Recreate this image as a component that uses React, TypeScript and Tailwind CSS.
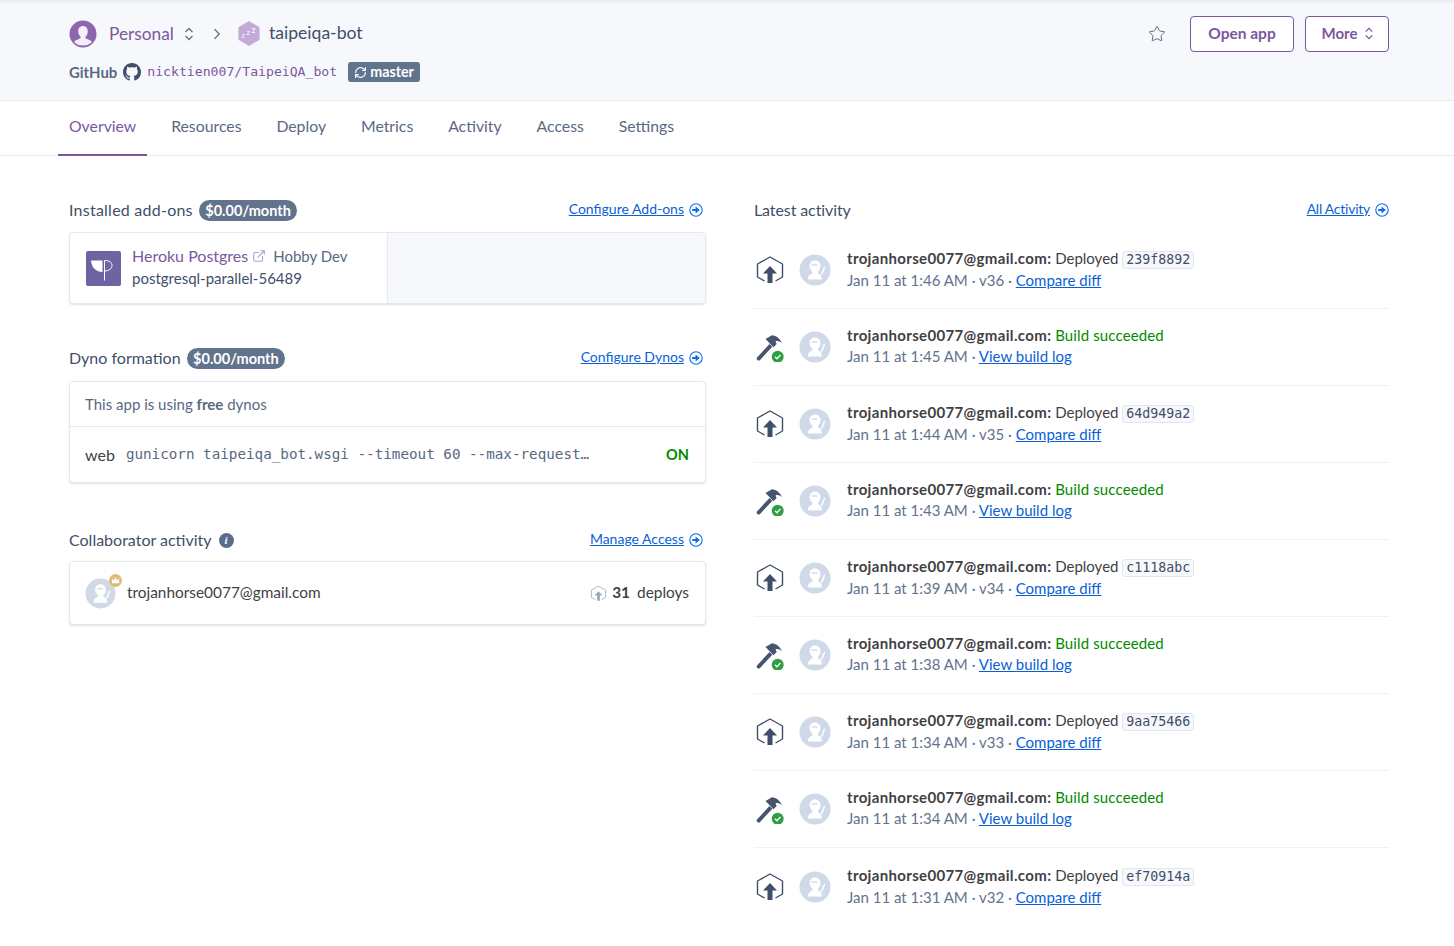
import { Star, ChevronRight, ExternalLink, RefreshCw } from 'lucide-react';

const sans = "font-['Lato','Noto_Sans',sans-serif]";
const mono = "font-['DejaVu_Sans_Mono','Liberation_Mono',monospace]";

type Item = { time: string; version?: string; sha?: string };

const activity: Item[] = [
  { time: 'Jan 11 at 1:46 AM', version: 'v36', sha: '239f8892' },
  { time: 'Jan 11 at 1:45 AM' },
  { time: 'Jan 11 at 1:44 AM', version: 'v35', sha: '64d949a2' },
  { time: 'Jan 11 at 1:43 AM' },
  { time: 'Jan 11 at 1:39 AM', version: 'v34', sha: 'c1118abc' },
  { time: 'Jan 11 at 1:38 AM' },
  { time: 'Jan 11 at 1:34 AM', version: 'v33', sha: '9aa75466' },
  { time: 'Jan 11 at 1:34 AM' },
  { time: 'Jan 11 at 1:31 AM', version: 'v32', sha: 'ef70914a' },
];

function UpDown({ className }: { className: string }) {
  return (
    <svg viewBox="0 0 10 14" fill="none" stroke="currentColor" strokeWidth="1.3" className={className}>
      <path d="M1.5 5 5 1.5 8.5 5M1.5 9 5 12.5 8.5 9" />
    </svg>
  );
}

function GoArrow() {
  return (
    <svg viewBox="0 0 14 14" className="w-[14px] h-[14px] shrink-0">
      <circle cx="7" cy="7" r="6.2" fill="none" stroke="#0b6fe8" strokeWidth="1.1" />
      <path d="M3.2 5.9h3.400V3.600L10.800 7 6.600 10.400V8.100H3.200z" fill="#0b6fe8" />
    </svg>
  );
}

function DeployHex({ className, color = '#3f4f69' }: { className: string; color?: string }) {
  return (
    <svg viewBox="0 0 28 30" className={className}>
      <path d="M8.500 26 1.500 22V9L14 2l12.500 7v13l-7 4" fill="none" stroke={color} strokeWidth="1.400" strokeLinejoin="round" />
      <path d="M14 11 21 18.500h-4.500V28h-5V18.500H7z" fill={color} />
    </svg>
  );
}

function Hammer() {
  return (
    <svg viewBox="0 0 30 30" className="w-[30px] h-[30px]">
      <path d="M2 25.500 14.500 12l2.800 2.800L4.800 28.200a2 2 0 0 1-2.800-2.700z" fill="#46546e" />
      <path d="M10.500 7 17 3.200c4 .200 7.800 3 10.300 8.300C24.500 9 22.500 8.500 20.500 9.500l1.200 2.500-3.200 3.200-8-8.200z" fill="#46546e" />
      <circle cx="22.700" cy="24.700" r="6" fill="#2ea043" />
      <path d="M20 24.700l2 2 3.500-3.800" fill="none" stroke="#fff" strokeWidth="1.300" />
    </svg>
  );
}

function Avatar({ className }: { className: string }) {
  return (
    <svg viewBox="0 0 32 32" className={className}>
      <circle cx="16" cy="16" r="15.500" fill="#d0d9e8" />
      <path d="M16 6.500c3.500 0 5.500 2.500 5.500 5.500 0 2.500-1 4.500-2.500 5.700v1.500l3 1.500 1 4.800H9c0-2.500.700-4 2-4.800l2.500-1.500v-1.500C12 16.500 10.500 14.500 10.500 12c0-3 2-5.500 5.500-5.500z" fill="#fff" />
      <path d="M12.500 11h6" stroke="#d0d9e8" strokeWidth="1.300" />
      <path d="M22 20l3-7.500 1.300.500-3 8z" fill="#fff" />
    </svg>
  );
}

function SectionHead({
  title,
  badge,
  link,
  info,
  titleClass,
  linkClass,
  pad = 'pr-[3px]',
}: {
  title: string;
  badge?: boolean;
  link: string;
  info?: boolean;
  titleClass?: string;
  linkClass?: string;
  pad?: string;
}) {
  return (
    <div className={`flex items-center h-[24px] ${pad}`}>
      <span className={`text-[16px] text-[#3f4f69] ${titleClass ?? ''}`}>{title}</span>
      {badge && (
        <span className="ml-[6px] h-[21px] px-[6.500px] rounded-full bg-[#62738d] text-white text-[14.500px] font-bold leading-[21px]">
          $0.00/month
        </span>
      )}
      {info && (
        <span className="ml-[7px] w-[15px] h-[15px] rounded-full bg-[#5a6e8c] text-white text-[11px] font-bold italic leading-[15px] text-center font-['Liberation_Serif',serif]">
          i
        </span>
      )}
      <a className={`ml-auto mr-[5px] -mt-[3px] text-[14px] text-[#0b5fd6] underline ${linkClass ?? ''}`}>{link}</a>
      <GoArrow />
    </div>
  );
}

function Card({ children, className }: { children: React.ReactNode; className?: string }) {
  return (
    <div className={`rounded-[4px] border border-[#e4e8ef] bg-white shadow-[0_1px_2px_rgba(89,105,129,0.2)] ${className ?? ''}`}>
      {children}
    </div>
  );
}

function ActivityRow({ item }: { item: Item }) {
  const deploy = !!item.sha;
  return (
    <div className="flex items-center h-[77px] border-b border-[#eef1f6] last:border-b-0">
      <div className="w-[30px] ml-px flex justify-center">
        {deploy ? <DeployHex className="w-[28px] h-[30px]" /> : <Hammer />}
      </div>
      <Avatar className="ml-[14px] w-[32px] h-[32px]" />
      <div className={`ml-[16px] ${deploy ? 'pb-[2px]' : 'pb-[3px]'}`}>
        <div className="text-[15px] leading-[22px] text-[#3f3f44]">
          <span className="font-bold tracking-[0.34px]">trojanhorse0077@gmail.com:</span>{' '}
          {deploy ? (
            <>
              Deployed{' '}
              <span className={`${mono} inline-block text-[13.300px] leading-[16px] text-[#3f4f69] bg-[#f7f8fb] border border-[#e0e5ee] rounded-[3px] px-[3px]`}>
                {item.sha}
              </span>
            </>
          ) : (
            <span className="text-[#008a00] tracking-[0.13px]">Build succeeded</span>
          )}
        </div>
        <div className={`text-[15px] leading-[21px] text-[#62738d] ${deploy ? 'mt-px' : ''}`}>
          {item.time}
          {deploy ? ` · ${item.version} · ` : ' · '}
          <a className="text-[#0b5fd6] underline">{deploy ? 'Compare diff' : 'View build log'}</a>
        </div>
      </div>
    </div>
  );
}

export default function App() {
  return (
    <div className={`${sans} min-h-[946px] bg-white overflow-hidden`}>
      <header className="h-[101px] bg-[#f7f8fb] border-b border-[#e7ebf3] bg-[linear-gradient(#e9ebf0,#f7f8fb_5px)] pl-[69px] pr-[65px] pt-[16px]">
        <div className="flex items-center h-[35px]">
          <svg viewBox="0 0 28 28" className="w-[28px] h-[28px] mr-[12px]">
            <circle cx="14" cy="14" r="13.500" fill="#8d66ad" />
            <path d="M14 6c3 0 4.800 2.300 4.800 5.200 0 2.300-1 4.300-2.300 5.400v1.700l5 2.300c.6.400 1 1 1.200 1.800A13 13 0 0 1 14 25.500 13 13 0 0 1 5.300 22.400c.2-.8.600-1.400 1.200-1.800l5-2.300v-1.700C10.200 15.500 9.200 13.500 9.200 11.200 9.200 8.300 11 6 14 6z" fill="#f5eff8" />
          </svg>
          <span className="text-[17.300px] text-[#79589f]">Personal</span>
          <UpDown className="ml-[10px] w-[10px] h-[14px] text-[#62738d]" />
          <ChevronRight className="ml-[14px] w-[18px] h-[18px] text-[#596981]" strokeWidth={1.5} />
          <svg viewBox="0 0 24 26" className="ml-[11px] w-[24px] h-[25px]">
            <path d="M12 0 23 6.500v13L12 26 1 19.500v-13z" fill="#c2abd8" />
            <text x="4.500" y="18" fontSize="7" fill="#fff">z</text>
            <text x="9.500" y="15" fontSize="8" fill="#fff">z</text>
            <text x="14.500" y="12" fontSize="9" fill="#fff">z</text>
          </svg>
          <span className="ml-[8px] text-[17.600px] text-[#3f4f69]">taipeiqa-bot</span>
          <Star className="ml-auto w-[18px] h-[18px] text-[#596981]" strokeWidth={1.3} />
          <button className="ml-[24px] w-[104px] h-[36px] rounded-[4px] border border-[#79589f] bg-white text-[15.500px] font-bold text-[#79589f]">
            Open app
          </button>
          <button className="ml-[11px] w-[84px] h-[36px] pl-[2px] rounded-[4px] border border-[#79589f] bg-white text-[15px] font-bold text-[#79589f] flex items-center justify-center gap-[7px]">
            More
            <UpDown className="w-[10px] h-[13px]" />
          </button>
        </div>
        <div className="flex items-center mt-[10px] h-[22px]">
          <span className="text-[14.900px] font-bold text-[#596981]">GitHub</span>
          <svg viewBox="0 0 16 16" className="ml-[6px] w-[18px] h-[18px]" fill="#3f4f69">
            <path d="M8 0C3.580 0 0 3.580 0 8c0 3.540 2.290 6.530 5.470 7.590.4.070.55-.170.55-.380 0-.190-.010-.820-.010-1.490-2.010.370-2.530-.490-2.690-.940-.090-.230-.480-.940-.820-1.130-.280-.150-.680-.520-.010-.530.630-.010 1.080.580 1.230.820.720 1.210 1.870.870 2.330.660.070-.520.280-.870.510-1.070-1.780-.200-3.640-.890-3.640-3.950 0-.870.310-1.590.820-2.150-.080-.200-.360-1.020.080-2.120 0 0 .670-.210 2.200.820.640-.180 1.320-.270 2-.270s1.360.090 2 .270c1.530-1.040 2.200-.820 2.200-.820.440 1.100.160 1.920.080 2.120.510.560.820 1.270.820 2.150 0 3.070-1.870 3.750-3.650 3.950.290.250.540.730.540 1.480 0 1.070-.010 1.930-.010 2.200 0 .210.150.460.550.380A8.010 8.010 0 0 0 16 8c0-4.420-3.580-8-8-8z" />
          </svg>
          <span className={`${mono} ml-[6px] text-[13.150px] text-[#79589f]`}>nicktien007/TaipeiQA_bot</span>
          <span className="ml-[11px] h-[20px] px-[6px] rounded-[3px] bg-[#62738d] text-white text-[14.300px] font-bold flex items-center gap-[3px]">
            <RefreshCw className="w-[13px] h-[13px]" strokeWidth={2.200} />
            master
          </span>
        </div>
      </header>

      <nav className="h-[55px] border-b border-[#e7ebf3] flex pl-[58px] text-[15.800px] text-[#596981]">
        {['Overview', 'Resources', 'Deploy', 'Metrics', 'Activity', 'Access', 'Settings'].map((tab, i) => (
          <a
            key={tab}
            className={`px-[11px] mr-[12.900px] h-[55px] leading-[50px] ${i === 0 ? 'text-[#79589f] border-b-2 border-[#79589f]' : ''}`}
          >
            {tab}
          </a>
        ))}
      </nav>

      <main className="flex pl-[69px] pr-[65px] pt-[42px]">
        <section className="w-[637px] shrink-0">
          <SectionHead title="Installed add-ons" badge link="Configure Add-ons" titleClass="tracking-[0.24px]" />
          <Card className="mt-[10px] flex h-[72px] overflow-hidden">
            <div className="w-[318px] flex items-center pl-[16px] border-r border-[#e4e8ef]">
              <div className="w-[35px] h-[35px] rounded-[2px] bg-[#7063a3] flex items-center justify-center">
                <svg viewBox="0 0 35 35" className="w-[35px] h-[35px]">
                  <path d="M5 9.500h11.500V21c-6 0-11-4-11.500-11.500z" fill="#fff" />
                  <path d="M18.500 9.500c5 0 7.500 2 7.500 5s-3 5.500-7.500 5.500M18.500 9.500v20" fill="none" stroke="#fff" strokeWidth="1" />
                </svg>
              </div>
              <div className="ml-[11px] -mt-[3px]">
                <div className="flex items-center text-[16px] leading-[22px]">
                  <span className="text-[#79589f]">Heroku Postgres</span>
                  <ExternalLink className="ml-[4px] w-[14px] h-[14px] text-[#b9a2d2]" strokeWidth={2} />
                  <span className="ml-[7px] text-[15px] text-[#596981]">Hobby Dev</span>
                </div>
                <div className="text-[15px] leading-[22px] text-[#3f4f69]">postgresql-parallel-56489</div>
              </div>
            </div>
            <div className="flex-1 bg-[#f7f8fb]" />
          </Card>

          <div className="mt-[42px]">
            <SectionHead title="Dyno formation" badge link="Configure Dynos" />
            <Card className="mt-[11px]">
              <div className="h-[45px] flex items-center pl-[15px] pr-[16px] border-b border-[#e4e8ef] text-[15px] text-[#596981]">
                This app is using&nbsp;<b>free</b>&nbsp;dynos
              </div>
              <div className="h-[55px] flex items-center pl-[15px] pr-[16px]">
                <span className="text-[16px] text-[#3f3f44]">web</span>
                <span className={`${mono} ml-[11px] text-[14.250px] text-[#596981]`}>
                  gunicorn taipeiqa_bot.wsgi --timeout 60 --max-request…
                </span>
                <span className="ml-auto text-[14.500px] font-bold text-[#008a00]">ON</span>
              </div>
            </Card>
          </div>

          <div className="mt-[45px]">
            <SectionHead title="Collaborator activity" info link="Manage Access" />
            <Card className="mt-[9px] h-[64px] flex items-center pl-[15px] pr-[16px]">
              <div className="relative w-[31px] h-[31px]">
                <Avatar className="w-[31px] h-[31px]" />
                <span className="absolute -top-[4px] -right-[6px] w-[13px] h-[13px] rounded-full bg-[#e0bb70] flex items-center justify-center">
                  <svg viewBox="0 0 10 10" className="w-[9px] h-[9px]" fill="#fff">
                    <path d="M1 2.500 3 5l2-3.500L7 5l2-2.500V8H1z" />
                  </svg>
                </span>
              </div>
              <span className="ml-[11px] text-[15.400px] text-[#3f3f44]">trojanhorse0077@gmail.com</span>
              <DeployHex className="ml-auto w-[17px] h-[17px]" color="#9aa8bd" />
              <span className="ml-[5px] text-[15.400px] text-[#3f3f44] flex gap-[7px]">
                <b>31</b>
                <span>deploys</span>
              </span>
            </Card>
          </div>
        </section>

        <section className="ml-[48px] flex-1">
          <SectionHead title="Latest activity" link="All Activity" pad="pr-0" titleClass="tracking-[-0.1px]" linkClass="tracking-[-0.25px]" />
          <div className="mt-[10px]">
            {activity.map((item, i) => (
              <ActivityRow key={i} item={item} />
            ))}
          </div>
        </section>
      </main>
    </div>
  );
}
